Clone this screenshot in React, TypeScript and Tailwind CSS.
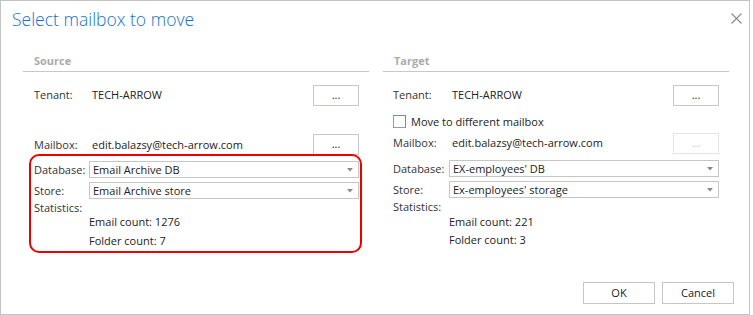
import React from "react";

const Dots = ({ disabled = false }: { disabled?: boolean }) => (
  <div
    className={`w-[46px] h-[21px] border flex items-center justify-center shrink-0 bg-white ${
      disabled ? "border-[#e3e3e3] text-[#c8c8c8]" : "border-[#c6c6c6] text-[#222]"
    }`}
  >
    <span className="leading-[10px] text-[11px] -mt-[1px]">...</span>
  </div>
);

const Select = ({ value }: { value: string }) => (
  <div className="flex-1 h-[17px] border border-[#c6c6c6] bg-white flex items-center pl-[3px] pr-[5px]">
    <span className="flex-1 text-[11px] leading-[15px] text-[#222]">{value}</span>
    <svg width="6" height="4" viewBox="0 0 6 4">
      <path d="M0 0 L6 0 L3 3.5 Z" fill="#8a8a8a" />
    </svg>
  </div>
);

export default function App() {
  return (
    <div className="w-[753px] h-[315px] bg-white font-['Segoe_UI','Open_Sans',sans-serif] text-[#333] text-[11px]">
      <div className="w-[750px] h-[315px] border border-[#c4c4c4] relative flex flex-col">
        <svg className="absolute left-[730px] top-[12px]" width="11" height="11" viewBox="0 0 11 11">
          <path d="M0.5 0.5 L10.5 10.5 M10.5 0.5 L0.5 10.5" stroke="#8a8a8a" strokeWidth="1.1" />
        </svg>
        <div className="h-[52px] pl-[11px] pt-[7px]">
          <span className="text-[17.5px] leading-[22px] font-light text-[#1273c6]">Select mailbox to move</span>
        </div>
        <div className="flex pl-[22px] gap-[14px]">
          {/* Source column */}
          <div className="w-[346px] flex flex-col">
            <div className="h-[19px] border-b border-[#c8c8c8] pl-[11px]">
              <span className="text-[11px] leading-[16px] font-bold text-[#ababab]">Source</span>
            </div>
            <div className="mt-[13px] h-[21px] flex items-center pl-[11px] pr-[10px]">
              <span className="w-[58px]">Tenant:</span>
              <span className="flex-1 text-[#222]">TECH-ARROW</span>
              <Dots />
            </div>
            <div className="mt-[28px] flex items-start pl-[11px] pr-[10px]">
              <span className="w-[58px] pt-[3px] leading-[16px]">Mailbox:</span>
              <span className="flex-1 pt-[3px] leading-[16px] text-[#222]">edit.balazsy@tech-arrow.com</span>
              <Dots />
            </div>
            <div className="relative z-10 -mt-[1px] ml-[6px] mr-[7px] border-2 border-[#ee0000] rounded-[10px] pt-[5px] pb-[3px] pl-[3px] pr-[1px] flex flex-col">
              <div className="flex items-center">
                <span className="w-[55px] leading-[16px]">Database:</span>
                <Select value="Email Archive DB" />
              </div>
              <div className="flex items-center mt-[4px]">
                <span className="w-[55px] leading-[16px]">Store:</span>
                <Select value="Email Archive store" />
              </div>
              <span className="mt-[2px] leading-[14px]">Statistics:</span>
              <span className="mt-[0px] pl-[55px] leading-[14px] text-[#222]">Email count: 1276</span>
              <span className="mt-[5px] pl-[55px] leading-[14px] text-[#222]">Folder count: 7</span>
            </div>
          </div>
          {/* Target column */}
          <div className="w-[346px] flex flex-col">
            <div className="h-[19px] border-b border-[#c8c8c8] pl-[11px]">
              <span className="text-[11px] leading-[16px] font-bold text-[#ababab]">Target</span>
            </div>
            <div className="mt-[13px] h-[21px] flex items-center pl-[10px] pr-[10px]">
              <span className="w-[59px]">Tenant:</span>
              <span className="flex-1 text-[#222]">TECH-ARROW</span>
              <Dots />
            </div>
            <div className="mt-[9px] flex items-center pl-[10px] h-[13px]">
              <div className="w-[13px] h-[13px] border border-[#9a9a9a] border-t-[#5d8ec4] border-r-[#5d8ec4] bg-white" />
              <span className="ml-[5px] leading-[16px] text-[#222]">Move to different mailbox</span>
            </div>
            <div className="mt-[5px] flex items-start pl-[10px] pr-[10px]">
              <span className="w-[59px] pt-[2px] leading-[16px]">Mailbox:</span>
              <span className="flex-1 pt-[2px] leading-[16px] text-[#222]">edit.balazsy@tech-arrow.com</span>
              <Dots disabled />
            </div>
            <div className="flex flex-col pl-[10px] pr-[10px] mt-[6px]">
              <div className="flex items-center">
                <span className="w-[56px] leading-[16px]">Database:</span>
                <Select value="EX-employees' DB" />
              </div>
              <div className="flex items-center mt-[4px]">
                <span className="w-[56px] leading-[16px]">Store:</span>
                <Select value="Ex-employees' storage" />
              </div>
              <span className="mt-[2px] leading-[14px]">Statistics:</span>
              <span className="mt-[1px] pl-[56px] leading-[14px] text-[#222]">Email count: 221</span>
              <span className="mt-[4px] pl-[56px] leading-[14px] text-[#222]">Folder count: 3</span>
            </div>
          </div>
        </div>
        <div className="mt-auto mb-[10px] flex justify-end gap-[7px] pr-[15px]">
          <div className="w-[72px] h-[22px] border border-[#c6c6c6] flex items-center justify-center text-[#222]">OK</div>
          <div className="w-[72px] h-[22px] border border-[#c6c6c6] flex items-center justify-center text-[#222]">Cancel</div>
        </div>
      </div>
    </div>
  );
}
